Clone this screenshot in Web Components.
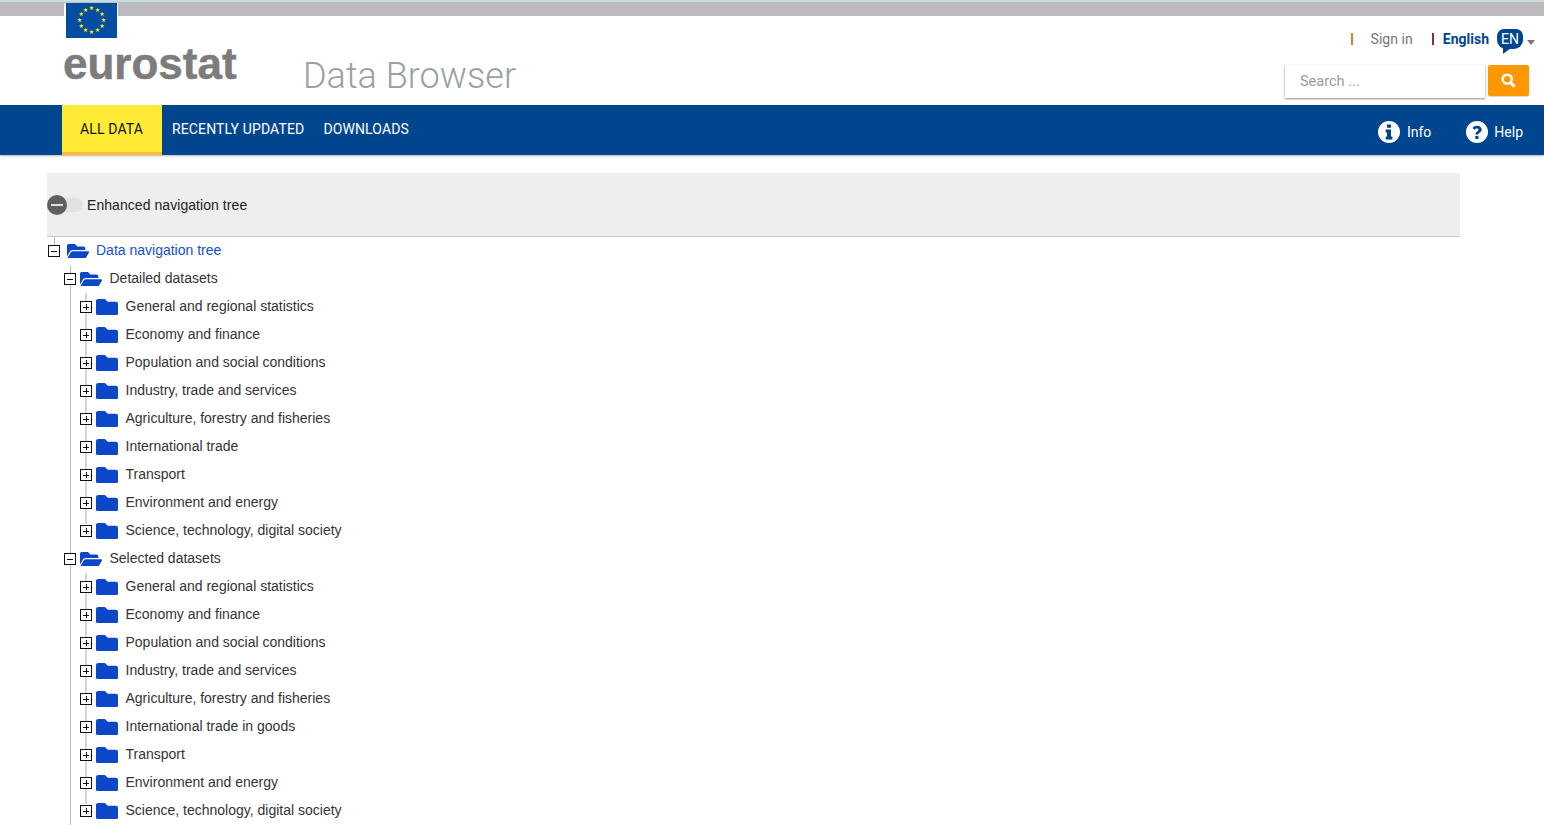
<!DOCTYPE html>
<html>
<head>
<meta charset="utf-8">
<style>
  html, body { margin: 0; background: #fff; height: 825px; overflow: hidden; }
  body { font-family: Roboto, "Liberation Sans", sans-serif; }
</style>
</head>
<body>
<es-header></es-header>
<es-nav></es-nav>
<es-page>
  <es-toggle>Enhanced navigation tree</es-toggle>
  <tree-node root open label="Data navigation tree">
    <tree-node open label="Detailed datasets">
      <tree-node label="General and regional statistics"></tree-node>
      <tree-node label="Economy and finance"></tree-node>
      <tree-node label="Population and social conditions"></tree-node>
      <tree-node label="Industry, trade and services"></tree-node>
      <tree-node label="Agriculture, forestry and fisheries"></tree-node>
      <tree-node label="International trade"></tree-node>
      <tree-node label="Transport"></tree-node>
      <tree-node label="Environment and energy"></tree-node>
      <tree-node label="Science, technology, digital society"></tree-node>
    </tree-node>
    <tree-node open label="Selected datasets">
      <tree-node label="General and regional statistics"></tree-node>
      <tree-node label="Economy and finance"></tree-node>
      <tree-node label="Population and social conditions"></tree-node>
      <tree-node label="Industry, trade and services"></tree-node>
      <tree-node label="Agriculture, forestry and fisheries"></tree-node>
      <tree-node label="International trade in goods"></tree-node>
      <tree-node label="Transport"></tree-node>
      <tree-node label="Environment and energy"></tree-node>
      <tree-node label="Science, technology, digital society"></tree-node>
    </tree-node>
  </tree-node>
</es-page>
<script>
window.customElements.define('es-header', class extends HTMLElement {
  constructor() {
    super()
    let shadow = this.attachShadow({ mode: 'open' })
    // stars of the flag, 12 of them on a circle
    let stars = ''
    for (let i = 0; i < 12; i++) {
      let a = i * Math.PI / 6
      let x = 25.5 + 12 * Math.sin(a), y = 17 - 12 * Math.cos(a)
      stars += `<text x="${x.toFixed(1)}" y="${(y + 2).toFixed(1)}" font-size="6" text-anchor="middle" fill="#ffed00" font-family="DejaVu Sans">★</text>`
    }
    shadow.innerHTML = `
      <style>
        :host { display: block; height: 105px; background: #fff; color: #777; }
        .strip { height: 14px; border-top: 2px solid #c9dde3; background: #bcbcbe; }
        .wrap { display: flex; justify-content: space-between; height: 89px; }
        .brand { display: flex; align-items: flex-start; padding-left: 63px; }
        .logo { display: flex; flex-direction: column; width: 174px; margin-top: -13px; }
        .flag { display: block; width: 51px; height: 35px; margin-left: 1px; border: solid #fff; border-width: 0 1px 1px 2px; }
        .word { font: bold 44px/1 "Liberation Sans", Arial, sans-serif; color: #7c7c7c; margin-top: 3px; -webkit-text-stroke: .5px #7c7c7c; }
        .title { font-weight: 300; font-size: 36px; line-height: 42px; color: #9aa0a6; margin: 39px 0 0 66px; letter-spacing: .03px; }
        .tools { display: flex; flex-direction: column; align-items: flex-end; padding-right: 8px; }
        .links { display: flex; align-items: center; height: 34px; margin: 6px 1px 0 0; font-size: 14px; }
        .bar { width: 2px; height: 12px; margin-right: 18px; }
        .sign { color: #757575; margin: 0 19px 0 0; letter-spacing: .05px; }
        .eng { color: #00468f; font-weight: 700; margin: 0 9px 0 -9px; }
        .bubble { position: relative; width: 26px; height: 20px; margin: -1px 0 0 -1px; background: #00468f; color: #fff; border-radius: 7px 7px 9px 9px; text-align: center; line-height: 20px; font-size: 14px; }
        .bubble::after { content: ''; position: absolute; left: 6px; top: 19px; border-right: 8px solid transparent; border-top: 6px solid #00468f; }
        .caret { width: 0; height: 0; margin: 7px 0 0 4px; border: 4px solid transparent; border-top: 5px solid #777; border-bottom: 0; }
        .search { display: flex; gap: 3px; margin: 9px 7px 0 0; }
        .input { width: 185px; height: 33px; padding-left: 15px; background: #fff; box-shadow: 0 1px 2px rgba(0,0,0,.45); font-size: 14.5px; line-height: 33px; color: #9a9a9a; }
        .go { display: flex; align-items: center; justify-content: center; width: 41px; height: 31px; background: #ff9800; border-radius: 2px; box-shadow: 0 1px 1px rgba(0,0,0,.15); }
      </style>
      <div class="strip"></div>
      <div class="wrap">
        <div class="brand">
          <div class="logo">
            <svg class="flag" viewBox="0 0 51 35"><rect width="51" height="35" fill="#034ea2"/>${stars}</svg>
            <div class="word">eurostat</div>
          </div>
          <div class="title">Data Browser</div>
        </div>
        <div class="tools">
          <div class="links">
            <span class="bar" style="background:#d9822b"></span>
            <span class="sign">Sign in</span>
            <span class="bar" style="background:#8e2b3c"></span>
            <span class="eng">English</span>
            <span class="bubble">EN</span>
            <span class="caret"></span>
          </div>
          <div class="search">
            <div class="input">Search ...</div>
            <div class="go">
              <svg width="15" height="15" viewBox="0 0 14 14" fill="none" stroke="#fff"><circle cx="5.800" cy="5.800" r="4.200" stroke-width="2.400"/><path d="M8.800 8.800 12.800 12.800" stroke-width="2.800"/></svg>
            </div>
          </div>
        </div>
      </div>`
  }
})

window.customElements.define('es-nav', class extends HTMLElement {
  constructor() {
    super()
    let shadow = this.attachShadow({ mode: 'open' })
    shadow.innerHTML = `
      <style>
        :host { display: flex; align-items: stretch; height: 50px; padding-left: 62px; background: #00468f; color: #fff; font-size: 14px; box-shadow: 0 1px 2px rgba(0,0,0,.3); }
        a { display: flex; align-items: center; color: inherit; box-sizing: border-box; letter-spacing: .13px; }
        .on { width: 100px; justify-content: center; padding-right: 1px; background: #ffeb33; color: #111; border-bottom: 3px solid #fdb92f; }
        .tab { margin-left: 10px; padding-bottom: 2px; }
        .tab + .tab { margin-left: 19px; }
        .right { display: flex; align-items: center; margin-left: auto; padding: 3px 21px 0 0; }
        .right span { display: flex; align-items: center; gap: 7px; }
        .right span + span { margin-left: 35px; gap: 6px; }
        svg { display: block; }
      </style>
      <a class="on">ALL DATA</a>
      <a class="tab">RECENTLY UPDATED</a>
      <a class="tab">DOWNLOADS</a>
      <div class="right">
        <span>
          <svg width="22" height="22" viewBox="0 0 22 22"><circle cx="11" cy="11" r="11" fill="#fff"/><path fill="#00468f" d="M9 3.500h4v3.200H9zM7.700 8.600H13v7h1.400v2.900H7.700v-2.900H9v-4.100H7.700z"/></svg>
          Info
        </span>
        <span>
          <svg width="22" height="22" viewBox="0 0 22 22"><circle cx="11" cy="11" r="11" fill="#fff"/><path fill="#00468f" d="M9.300 15h3.200v3H9.300zM9.400 13.600c-.2-2.600 3.100-3.100 3.100-4.800 0-.9-.7-1.400-1.600-1.400-.9 0-1.700.5-2.300 1.300L6.500 7c1-1.500 2.600-2.300 4.600-2.300 2.500 0 4.600 1.400 4.600 3.900 0 3-3.500 3.200-3.300 5z"/></svg>
          Help
        </span>
      </div>`
  }
})

window.customElements.define('es-page', class extends HTMLElement {
  constructor() {
    super()
    let shadow = this.attachShadow({ mode: 'open' })
    shadow.innerHTML = `
      <style>
        :host { display: block; width: 1413px; margin: 18px 0 0 47px; color: #333; font: 14px "Liberation Sans", Arial, sans-serif; }
      </style>
      <slot></slot>`
  }
})

window.customElements.define('es-toggle', class extends HTMLElement {
  constructor() {
    super()
    let shadow = this.attachShadow({ mode: 'open' })
    shadow.innerHTML = `
      <style>
        :host { display: flex; align-items: center; height: 63px; margin-bottom: -1px; background: #eee; border-bottom: 1px solid #ccc; color: #222; letter-spacing: .06px; }
        .track { position: relative; width: 36px; height: 14px; margin-right: 4px; background: #e2e2e2; border-radius: 7px; }
        .knob { position: absolute; left: 0; top: -3px; width: 20px; height: 20px; border-radius: 50%; background: #5f5f5f; }
        .knob::after { content: ''; position: absolute; left: 4px; top: 9px; width: 12px; height: 2px; background: #ddd; }
      </style>
      <div class="track"><div class="knob"></div></div>
      <slot></slot>`
  }
})

const FOLDER = `<svg width="22" height="16.500" viewBox="0 64 512 384"><path fill="#0d47c9" d="M464 128H272l-64-64H48C21.490 64 0 85.490 0 112v288c0 26.510 21.490 48 48 48h416c26.510 0 48-21.490 48-48V176c0-26.510-21.490-48-48-48z"/></svg>`
const FOLDER_OPEN = `<svg width="22" height="14.700" viewBox="0 64 576 384"><path fill="#0d47c9" d="M572.694 292.093L500.270 416.248A63.997 63.997 0 0 1 444.989 448H45.025c-18.523 0-30.064-20.093-20.731-36.093l72.424-124.155A64 64 0 0 1 152 256h399.964c18.523 0 30.064 20.093 20.730 36.093zM152 224h328v-48c0-26.510-21.490-48-48-48H272l-64-64H48C21.490 64 0 85.490 0 112v278.046l69.077-118.418C86.214 242.250 117.989 224 152 224z"/></svg>`

window.customElements.define('tree-node', class extends HTMLElement {
  constructor() {
    super()
    this.attachShadow({ mode: 'open' })
  }
  connectedCallback() {
    let open = this.hasAttribute('open')
    let root = this.hasAttribute('root')
    let gap = root ? '7px' : open ? '7.500px' : '8px'
    this.shadowRoot.innerHTML = `
      <style>
        :host { display: block; }
        .row { position: relative; display: flex; align-items: center; height: 28px; padding-left: 1px; }
        .box { position: relative; flex: none; width: 10px; height: 10px; border: 1px solid #111; background: #fff; margin: 2px 1px 0 0; }
        .box::before { content: ''; position: absolute; left: 2px; top: 4.500px; width: 6px; height: 1px; background: #111; }
        .box.plus::after { content: ''; position: absolute; left: 4.500px; top: 2px; width: 1px; height: 6px; background: #111; }
        .ico { display: flex; flex: none; margin: 2px ${gap} 0 ${root ? '6px' : open ? '3px' : '2.500px'}; }
        .label { white-space: nowrap; color: ${root ? '#1450d2' : '#333'}; }
        /* guide lines */
        .kids { position: relative; margin-left: 7px; padding-left: 9px; }
        .kids::before { content: ''; position: absolute; top: 1px; left: ${root ? '16px' : '15px'}; width: ${root ? '1px' : '2px'}; bottom: ${root ? '-20px' : '20px'}; background: ${root ? '#bbb' : '#d4d4d4'}; }
        .top { position: absolute; left: 7px; top: 1px; width: 1px; height: 9px; background: #bbb; }
      </style>
      <div class="row">
        ${root ? '<span class="top"></span>' : ''}
        <span class="box ${open ? '' : 'plus'}"></span>
        <span class="ico">${open ? FOLDER_OPEN : FOLDER}</span>
        <span class="label">${this.getAttribute('label')}</span>
      </div>
      ${open ? '<div class="kids"><slot></slot></div>' : ''}`
  }
})
</script>
</body>
</html>
